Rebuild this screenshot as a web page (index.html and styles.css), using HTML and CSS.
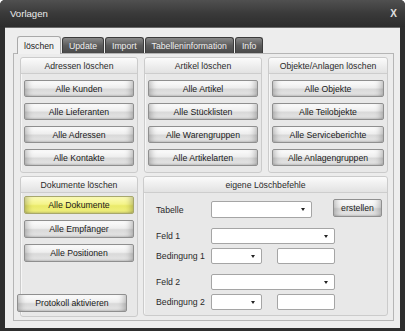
FILE: index.html
```html
<!DOCTYPE html>
<html lang="de">
<head>
    <meta charset="UTF-8">
    <title>Vorlagen</title>
    <link rel="stylesheet" href="styles.css">
</head>
<body>
    <div class="window">
        <div class="titlebar">
            <span>Vorlagen</span>
            <span class="close">X</span>
        </div>
        <div class="client">
            <div class="tabs">
                <div class="tab active">löschen</div>
                <div class="tab">Update</div>
                <div class="tab">Import</div>
                <div class="tab">Tabelleninformation</div>
                <div class="tab">Info</div>
            </div>
            <div class="panel">
                <div class="group">
                    <div class="group-head">Adressen löschen</div>
                    <div class="btns">
                        <button>Alle Kunden</button>
                        <button>Alle Lieferanten</button>
                        <button>Alle Adressen</button>
                        <button>Alle Kontakte</button>
                    </div>
                </div>
                <div class="group">
                    <div class="group-head">Artikel löschen</div>
                    <div class="btns">
                        <button>Alle Artikel</button>
                        <button>Alle Stücklisten</button>
                        <button>Alle Warengruppen</button>
                        <button>Alle Artikelarten</button>
                    </div>
                </div>
                <div class="group">
                    <div class="group-head">Objekte/Anlagen löschen</div>
                    <div class="btns">
                        <button>Alle Objekte</button>
                        <button>Alle Teilobjekte</button>
                        <button>Alle Serviceberichte</button>
                        <button>Alle Anlagengruppen</button>
                    </div>
                </div>
                <div class="group docs">
                    <div class="group-head">Dokumente löschen</div>
                    <div class="btns">
                        <button class="hot">Alle Dokumente</button>
                        <button>Alle Empfänger</button>
                        <button>Alle Positionen</button>
                    </div>
                    <button class="protokoll">Protokoll aktivieren</button>
                </div>
                <div class="group custom">
                    <div class="group-head">eigene Löschbefehle</div>
                    <div class="form">
                        <div class="row r-tab">
                            <label>Tabelle</label>
                            <div class="combo w-tab"><span class="arrow"></span></div>
                            <button class="make">erstellen</button>
                        </div>
                        <div class="row r-feld">
                            <label>Feld 1</label>
                            <div class="combo w-feld"><span class="arrow"></span></div>
                        </div>
                        <div class="row r-bed">
                            <label>Bedingung 1</label>
                            <div class="combo w-bed"><span class="arrow"></span></div>
                            <div class="edit"></div>
                        </div>
                        <div class="row r-feld">
                            <label>Feld 2</label>
                            <div class="combo w-feld"><span class="arrow"></span></div>
                        </div>
                        <div class="row r-bed">
                            <label>Bedingung 2</label>
                            <div class="combo w-bed"><span class="arrow"></span></div>
                            <div class="edit"></div>
                        </div>
                    </div>
                </div>
            </div>
        </div>
    </div>
</body>
</html>
```

FILE: styles.css
```css
body {
    margin: 0;
    background-color: #ffffff;
    font-family: "Liberation Sans", Arial, sans-serif;
    font-size: 8.7px;
    color: #1e1e1e;
}
.window {
    width: 405px;
    height: 331px;
    box-sizing: border-box;
    background-color: #2e2e2e;
    border-radius: 5px 5px 0 0;
    display: flex;
    flex-direction: column;
}
.titlebar {
    height: 27px;
    flex: none;
    display: flex;
    align-items: center;
    justify-content: space-between;
    padding: 0 8px 0 10px;
    background: linear-gradient(#505050, #3a3a3a 50%, #2c2c2c);
    border-radius: 5px 5px 0 0;
    color: #ececec;
    font-size: 9.6px;
}
.close {
    font-weight: bold;
    font-size: 10px;
    color: #e0e0e0;
}
.client {
    flex: 1;
    margin: 0 5px 4px 5px;
    background-color: #ededed;
    padding: 8px 6px 7px 8px;
    border-top: 1px solid #6a6a6a;
}
.tabs {
    display: flex;
    gap: 1px;
    height: 17px;
    padding-left: 4px;
    box-sizing: border-box;
}
.tab {
    height: 16px;
    margin-top: 1px;
    padding: 0 6px;
    display: flex;
    align-items: center;
    box-sizing: border-box;
    background: linear-gradient(#8a8a8a, #5c5c5c 50%, #4a4a4a);
    border: 1px solid #3c3c3c;
    border-bottom: none;
    border-radius: 3px 3px 0 0;
    color: #eeeeee;
}
.tab.active {
    height: 18px;
    margin-top: 0;
    margin-bottom: -1px;
    background: #f1f1f1;
    border-color: #a9a9a9;
    color: #222;
    position: relative;
}
.panel {
    height: 268px;
    box-sizing: border-box;
    border: 1px solid #b5b5b5;
    background-color: #ececec;
    padding: 3px 6px 3px 6px;
    display: grid;
    grid-template-columns: 118px 118px 120px;
    grid-template-rows: 116px 141px;
    column-gap: 6px;
    row-gap: 3px;
}
.group {
    border: 1px solid #cbcbcb;
    border-radius: 3px;
    background-color: #e8e8e8;
    display: flex;
    flex-direction: column;
    box-shadow: inset 1px 1px 0 #f6f6f6;
}
.group-head {
    height: 15px;
    flex: none;
    border-bottom: 1px solid #cdcdcd;
    background: linear-gradient(#fbfbfb, #ececec 60%, #e2e2e2);
    border-radius: 3px 3px 0 0;
    display: flex;
    align-items: center;
    justify-content: center;
    color: #2a2a2a;
}
.btns {
    display: flex;
    flex-direction: column;
    gap: 6px;
    padding: 6px 3px 0 3px;
}
button {
    font-family: inherit;
    font-size: inherit;
    color: #1a1a1a;
    height: 17px;
    padding: 0;
    border: 1px solid #8f8f8f;
    border-radius: 2px;
    background: linear-gradient(#fdfdfd, #eeeeee 45%, #d9d9d9 55%, #e6e6e6);
    box-shadow: inset 7px 0 6px -5px rgba(0, 0, 0, 0.25),
                inset -7px 0 6px -5px rgba(0, 0, 0, 0.25),
                inset 0 -2px 2px -1px rgba(0, 0, 0, 0.15);
}
button.hot {
    background: linear-gradient(#fcfcb8, #f4f48a 45%, #eaea6a 55%, #f0f080);
    border-color: #a7a76c;
}
.docs .btns {
    padding-top: 3px;
}
.docs button {
    height: 18px;
}
.protokoll {
    margin: auto 0 4px -4px;
    width: 110px;
    height: 18px;
}
.custom {
    height: 138px;
    width: 243px;
    margin-left: -1px;
}
.form {
    padding: 8px 0 0 12px;
    color: #2a2a2a;
}
.row {
    display: flex;
    align-items: center;
}
.row label {
    width: 55px;
    flex: none;
}
.r-feld {
    margin-top: 10px;
}
.r-bed {
    margin-top: 4px;
}
.combo, .edit {
    height: 16px;
    box-sizing: border-box;
    background-color: #ffffff;
    border: 1px solid #a5a5a5;
    border-radius: 2px;
}
.combo {
    display: flex;
    align-items: center;
    justify-content: flex-end;
    padding-right: 6px;
}
.arrow {
    width: 0;
    height: 0;
    border-left: 2.5px solid transparent;
    border-right: 2.5px solid transparent;
    border-top: 3px solid #222;
}
.w-tab {
    width: 101px;
    height: 17px;
}
.w-feld {
    width: 124px;
}
.w-bed {
    width: 51px;
}
.edit {
    width: 58px;
    margin-left: 15px;
}
.make {
    width: 49px;
    height: 18px;
    margin-left: 21px;
    margin-top: -3px;
}
```
